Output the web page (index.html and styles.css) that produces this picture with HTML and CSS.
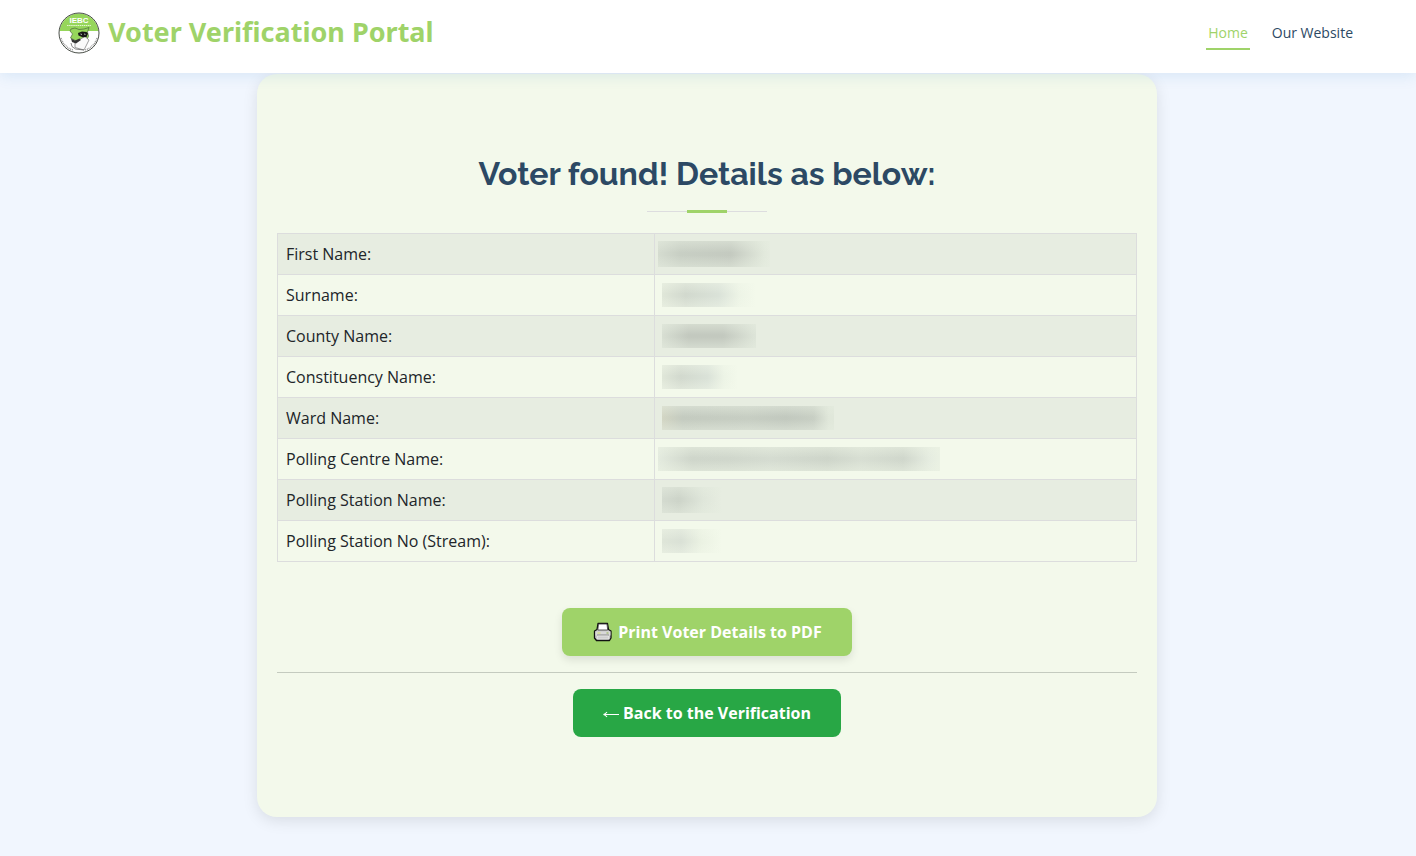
FILE: index.html
```html
<!DOCTYPE html>
<html lang="en">
<head>
<meta charset="utf-8">
<meta name="viewport" content="width=device-width, initial-scale=1">
<title>Voter Verification Portal</title>
<link rel="stylesheet" href="styles.css">
</head>
<body>
<header class="header">
  <a class="brand" href="#">
    <svg class="brand-logo" viewBox="0 0 42 42" aria-hidden="true">
      <defs><clipPath id="seal"><circle cx="21" cy="21" r="19.5"/></clipPath></defs>
      <circle cx="21" cy="21" r="20" fill="#fff"/>
      <rect class="seal-band" x="0" y="0" width="42" height="19" clip-path="url(#seal)"/>
      <circle cx="21" cy="21" r="20" fill="none" stroke="#4a4f48" stroke-width="1"/>
      <path d="M3 26a18.500 18.500 0 0 0 12 12M39 26a18.500 18.500 0 0 1-12 12" fill="none" stroke="#888" stroke-width="1.200" stroke-dasharray="1 .8"/>
      <text class="seal-text" x="21" y="11" text-anchor="middle">IEBC</text>
      <path d="M9 13.500h24" stroke="#e4f5d1" stroke-width="1" stroke-dasharray="1.500 .6"/>
      <path d="M13 17L17 16L21 17.500L26 17L31 15.500L29.500 20L30.500 24L27 33L20 30L12.500 26L14.500 22L12 19z" fill="#96d65b" stroke="#4d6640" stroke-width=".7"/>
      <path d="M17 30L27 24.500L31 28L26 38L17 35.500z" fill="#fafafa" stroke="#777" stroke-width=".7"/>
      <path d="M20 21l4-1.500 4.500.5 1.500 1.500-1.500 3.500-4 .3-4-1.800z" fill="#171717"/>
      <path d="M22.500 22l1.500.5M26 22l1.500.4" stroke="#fff" stroke-width=".7"/>
      <path d="M13 26.500L17 28.500L21.500 26.500L23 28L18 31.500L14 30z" fill="#333"/>
      <path d="M13 31l1 3.500L17.500 37l8.500 1" fill="none" stroke="#666" stroke-width=".8"/>
    </svg>
    <span class="brand-name">Voter Verification Portal</span>
  </a>
  <nav class="nav">
    <a class="nav-link nav-link-active" href="#">Home</a>
    <a class="nav-link" href="#">Our Website</a>
  </nav>
</header>
<div class="page">
<main class="card">
  <h1 class="title">Voter found! Details as below:</h1>
  <div class="divider"></div>
  <table class="details">
    <tbody>
      <tr><th scope="row">First Name:</th><td><span class="mask mask-lead mask-tall w-112"></span></td></tr>
      <tr><th scope="row">Surname:</th><td><span class="mask mask-soft w-94"></span></td></tr>
      <tr><th scope="row">County Name:</th><td><span class="mask w-94"></span></td></tr>
      <tr><th scope="row">Constituency Name:</th><td><span class="mask mask-soft w-76"></span></td></tr>
      <tr><th scope="row">Ward Name:</th><td><span class="mask mask-warm w-172"></span></td></tr>
      <tr><th scope="row">Polling Centre Name:</th><td><span class="mask mask-lead mask-long w-282"></span></td></tr>
      <tr><th scope="row">Polling Station Name:</th><td><span class="mask mask-short mask-tall w-60"></span></td></tr>
      <tr><th scope="row">Polling Station No (Stream):</th><td><span class="mask mask-short mask-pale w-60"></span></td></tr>
    </tbody>
  </table>
  <button class="button button-print" type="button">
    <svg class="printer" viewBox="0 0 20 20" aria-hidden="true">
      <path d="M5.500 1.500h9.500l1 6 2.500 1.500v7l-1.500 2.500H4L2 16V9l2.500-1.500z" fill="#c9c9c9" stroke="#111" stroke-width="1.300" stroke-linejoin="round"/>
      <path d="M6 2h8.500l.7 6H5.300z" fill="#fff" stroke="#333" stroke-width=".8"/>
      <path d="M3 9.500h15v4H3z" fill="#d9d9d9"/>
      <path d="M4.500 13h12" stroke="#888" stroke-width="1"/>
      <path d="M5 14h11v3H5z" fill="#d0d0d0" stroke="#eee" stroke-width=".6"/>
      <path d="M5 11h3" stroke="#d8e36a" stroke-width="1"/>
      <path d="M14 11h2" stroke="#8fb14d" stroke-width="1"/>
    </svg>
    Print Voter Details to PDF
  </button>
  <hr class="rule">
  <a class="button button-back" href="#">
    <svg class="arrow" viewBox="0 0 16 16" aria-hidden="true"><path d="M16 9.500H1M4 7Q2.500 9 .5 9.500q2 .5 3.500 2.500" fill="none" stroke="#fff" stroke-width="1.100"/></svg>
    Back to the Verification
  </a>
</main>
</div>
</body>
</html>
```
FILE: styles.css
```css
* { box-sizing: border-box; }

body {
  margin: 0;
  background: #f1f6fe;
  color: #212529;
  font: 16px/24px "Open Sans", "Noto Sans", sans-serif;
}

a { text-decoration: none; }

.header {
  position: relative;
  z-index: 1;
  display: flex;
  align-items: flex-start;
  justify-content: space-between;
  padding: 12px 61px 19px 58px;
  background: #fff;
  box-shadow: 0 2px 15px rgba(16, 110, 180, 0.12);
}

.brand {
  display: flex;
  align-items: flex-start;
  gap: 8px;
  color: #9fd369;
}

.brand-logo { width: 42px; height: 42px; }
.seal-band { fill: #96d65b; }
.seal-text { fill: #fff; font: bold 8px "Liberation Sans", sans-serif; }

.brand-name {
  font: bold 27px/40px "Noto Sans", "Open Sans", sans-serif;
}

.nav { display: flex; gap: 20px; }

.nav-link {
  padding: 10px 2px 4px;
  border-bottom: 2px solid transparent;
  color: #2c4964;
  font-size: 14px;
  line-height: 22px;
}

.nav-link-active {
  border-color: #9fd369;
  color: #9fd369;
}

.page { padding: 1px 2px 39px 0; }

.card {
  display: flex;
  flex-direction: column;
  align-items: center;
  max-width: 900px;
  margin: 0 auto;
  padding: 80px 20px;
  border-radius: 20px;
  background: #f3f9eb;
  box-shadow: 0 4px 15px rgba(0, 0, 0, 0.1);
}

.title {
  margin: 0;
  color: #2c4964;
  font: bold 32px/40px Raleway, Lato, sans-serif;
}

.divider {
  width: 120px;
  height: 3px;
  margin: 16px 0 20px;
  background:
    linear-gradient(#9fd369, #9fd369) center / 40px 3px no-repeat,
    linear-gradient(#dddddf, #dddddf) center / 120px 1px no-repeat;
}

.details {
  width: 100%;
  border-collapse: collapse;
  table-layout: fixed;
}

.details th,
.details td {
  height: 41px;
  padding: 8px;
  border: 1px solid #dcdddd;
  font-weight: normal;
  line-height: 24px;
  text-align: left;
}

.details th { width: 377px; }
.details td { padding: 0 7px; }
.details tr:nth-child(odd) { background: #e7ede1; }

/* Blurred strips that hide the voter's personal values */
.mask {
  --veil: rgba(230, 237, 224, 0.5);
  display: block;
  height: 24px;
  background:
    linear-gradient(var(--veil), transparent 45%, transparent 55%, var(--veil)),
    linear-gradient(90deg, #d8dfd3, #c3c9bf 28%, #c3c9bf 65%, #dce3d7 97%, #dde4d8);
}

.mask-tall { height: 26px; }
.mask-lead { margin-left: -4px; }

.mask-tall.w-112 {
  background:
    linear-gradient(var(--veil), transparent 45%, transparent 55%, var(--veil)),
    linear-gradient(90deg, #d5dcd0, #c8cfc4 20%, #c4cac0 65%, #e2e9dc 95%, #e5ebdf);
}

.mask-soft {
  --veil: rgba(243, 249, 235, 0.4);
  background:
    linear-gradient(var(--veil), transparent 45%, transparent 55%, var(--veil)),
    linear-gradient(90deg, #e0e7d9, #d2d9ce 25%, #dae2d8 60%, #edf4e6 82%, #f3f9eb);
}

.mask-warm {
  background:
    linear-gradient(var(--veil), transparent 45%, transparent 55%, var(--veil)),
    linear-gradient(90deg, #d3d6c4, #c4cbc0 12%, #c7cec3 50%, #c2c9bf 72%, #c8cfc4 88%, #e0e7da 97%);
}

.mask-long {
  --veil: rgba(235, 242, 227, 0.5);
  background:
    linear-gradient(var(--veil), transparent 45%, transparent 55%, var(--veil)),
    linear-gradient(90deg, #e4ebdf, #cfd6cb 12%, #d0d7cc 25%, #d5dcd1 40%, #ced5ca 60%, #d8dfd3 72%, #d0d7cc 87%, #e5ece0 96%, #eaf1e3);
}

.mask-short {
  background:
    linear-gradient(var(--veil), transparent 45%, transparent 55%, var(--veil)),
    linear-gradient(90deg, #d4dbd0, #cdd4c9 28%, #dfe6da 68%, #e7ede1);
}

.mask-pale {
  --veil: rgba(243, 249, 235, 0.4);
  background:
    linear-gradient(var(--veil), transparent 45%, transparent 55%, var(--veil)),
    linear-gradient(90deg, #dfe6d9, #dae1d6 32%, #ebf2e3 66%, #f3f9eb);
}

.w-60 { width: 60px; }
.w-76 { width: 76px; }
.w-94 { width: 94px; }
.w-112 { width: 112px; }
.w-172 { width: 172px; }
.w-282 { width: 282px; }

.button {
  display: inline-flex;
  align-items: center;
  justify-content: center;
  padding: 12px 30px;
  border: 0;
  border-radius: 8px;
  color: #fff;
  font: bold 16px/24px "Open Sans", sans-serif;
  cursor: pointer;
}

.button-print {
  gap: 5px;
  margin-top: 46px;
  background: #9fd369;
  box-shadow: 0 4px 8px rgba(0, 0, 0, 0.1);
}

.button-back {
  gap: 4px;
  background: #28a745;
}

.printer { width: 21px; height: 20px; }
.arrow { width: 16px; height: 16px; }

.rule {
  width: 100%;
  height: 1px;
  margin: 16px 0;
  border: 0;
  background: #c4cbbf;
}
```
